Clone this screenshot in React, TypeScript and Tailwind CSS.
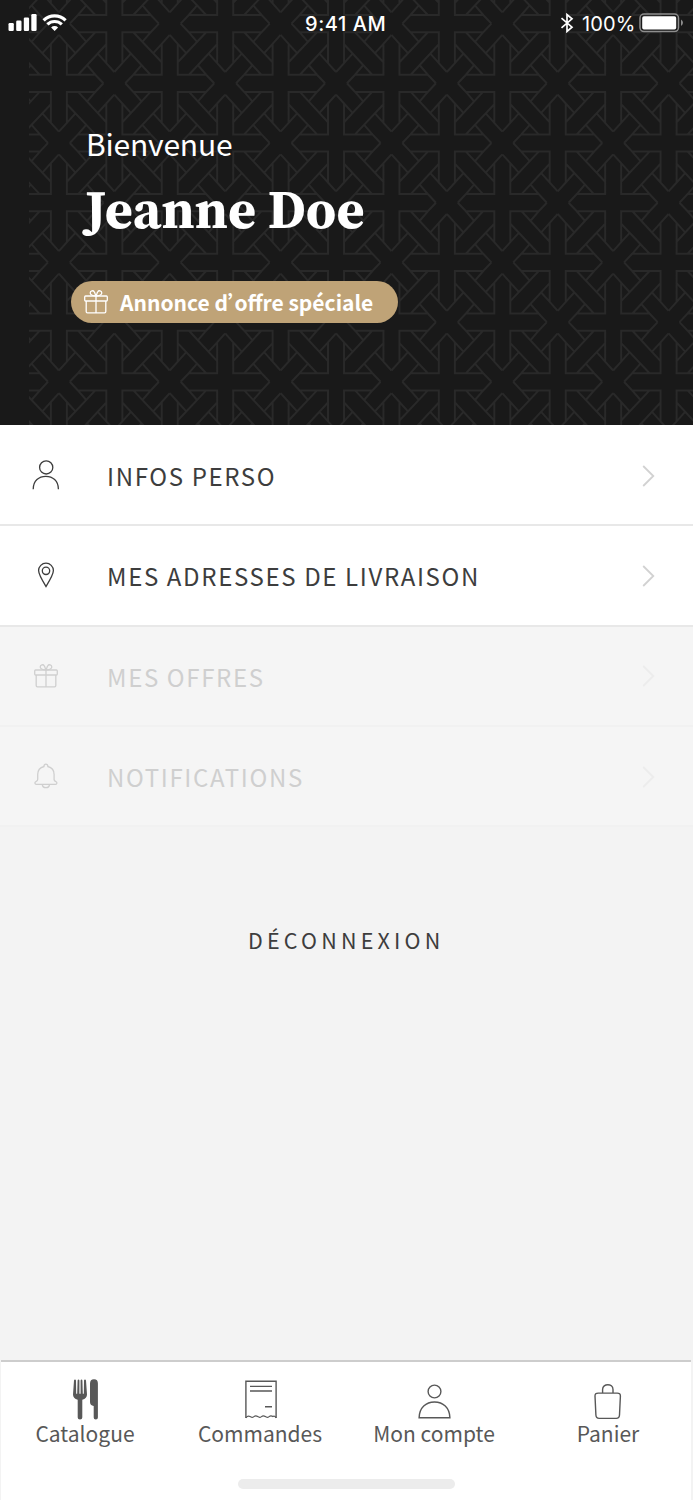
import React from "react";

const sans = "font-['Noto_Sans_CJK_SC',sans-serif]";

const CELL =
  "M44.5 0L36.4 8.6H8V39.5L0 48.4M10.9 59.7L19 51.1H47.4V20.2L55.4 11.3M19.3 8.6L47.4 39M8 21L36.4 51.1M36.4 8.6L28.5 17.8M47.4 20.2L38.9 29.6M8 39.5L16.5 30.1M19 51.1L26.9 42";

const TILE_W = 110.85;
const TILE_H = 119.4;
const COLUMNS = [-1, 0, 1, 2, 3, 4, 5];
const LINES = [-1, 0, 1, 2];

function Lattice() {
  return (
    <svg className="absolute top-0 left-[29px]" width="664" height="425" viewBox="29 0 664 425">
      <defs>
        <g id="lattice-tile" fill="none" stroke="#292929" strokeWidth="2">
          <path d={CELL} />
          <path d={CELL} transform="translate(110.85 0) scale(-1 1)" />
          <path d={CELL} transform="translate(0 119.4) scale(1 -1)" />
          <path d={CELL} transform="translate(110.85 119.4) scale(-1 -1)" />
        </g>
      </defs>
      {LINES.map((line) =>
        COLUMNS.map((column) => (
          <use key={`${line}:${column}`} href="#lattice-tile" x={58.9 + column * TILE_W} y={83.3 + line * TILE_H} />
        ))
      )}
    </svg>
  );
}

function StatusBar() {
  return (
    <div className="relative flex h-[46px] items-center justify-between pr-[9px] pl-2 font-['Inter',sans-serif] text-white">
      <svg width="60" height="20" viewBox="8 13 60 20" fill="#fff">
        <rect x="8.5" y="23" width="5.3" height="8" rx="1.2" />
        <rect x="16.2" y="20.5" width="5.3" height="10.5" rx="1.2" />
        <rect x="23.8" y="17.5" width="5.3" height="13.5" rx="1.2" />
        <rect x="31.3" y="14" width="5.3" height="17" rx="1.2" />
        <g fill="none" stroke="#fff" strokeWidth="3.1">
          <path d="M43.6 20.3a15.8 15.8 0 0 1 22 0" />
          <path d="M47.4 24.4a10.3 10.3 0 0 1 14.4 0" />
        </g>
        <path d="M51.1 27.4a5 5 0 0 1 7 0L54.6 31z" />
      </svg>
      <span className="absolute left-[305px] pt-[2px] text-[20px] leading-[24px] font-medium tracking-[0.55px]">9:41 AM</span>
      <div className="flex items-center">
        <svg width="14" height="20" viewBox="0 0 14 20" fill="none" stroke="#fff" strokeWidth="1.7">
          <path d="M1.5 5.2L12 14.2L7 18.4V1.6L12 5.8L1.5 14.8" />
        </svg>
        <span className="ml-2 w-[57px] pt-[2px] text-[20px] leading-[24px] tracking-[0.1px]">100%</span>
        <svg width="45" height="20" viewBox="0 0 45 20">
          <rect x="1" y="1" width="38.5" height="17.6" rx="4" fill="none" stroke="#8d8d8d" strokeWidth="1.5" />
          <rect x="3.2" y="3.2" width="34" height="13.2" rx="1.7" fill="#fff" />
          <path d="M42 6.6q2 1.2 2 3.2t-2 3.2z" fill="#8d8d8d" />
        </svg>
      </div>
    </div>
  );
}

function Gift({ className }: { className: string }) {
  return (
    <svg className={className} width="24" height="24" viewBox="0 0 24 24" fill="none" stroke="currentColor" strokeWidth="1.3">
      <rect x="0.7" y="6" width="22.6" height="5" rx="0.9" />
      <path d="M2.2 11V21.6q0 1.2 1.2 1.2H20.6q1.2 0 1.2-1.2V11M12 6V22.8" />
      <path d="M12 5.8C9.5 6 6.2 5 6.2 3C6.2 .6 9.2 .1 10.3 1.8C11.3 3.2 11 4.5 12 5.8C13 4.5 12.7 3.2 13.7 1.8C14.8 .1 17.8 .6 17.8 3C17.8 5 14.5 6 12 5.8Z" />
    </svg>
  );
}

function Person() {
  return (
    <svg width="28" height="30" viewBox="0 0 28 30" fill="none" stroke="currentColor" strokeWidth="1.3">
      <circle cx="14.2" cy="7.4" r="6.6" />
      <path d="M1.2 29.2C1.2 20.5 7 16.3 13.8 16.3S26.4 20.5 26.4 29.2" />
    </svg>
  );
}

function Pin() {
  return (
    <svg width="18" height="26" viewBox="0 0 18 26" fill="none" stroke="currentColor" strokeWidth="1.3">
      <path d="M9 24.6C6.5 20.5 1.6 12.6 1.6 8.6a7.4 7.4 0 0 1 14.8 0C16.4 12.6 11.5 20.5 9 24.6Z" />
      <circle cx="9" cy="8.8" r="3.7" />
    </svg>
  );
}

function Bell() {
  return (
    <svg width="24" height="26" viewBox="0 0 24 26" fill="none" stroke="currentColor" strokeWidth="1.3" strokeLinejoin="round">
      <path d="M10 3.5C9.6 .4 14.2 .4 13.8 3.5C18 4.5 20.1 7.7 20.1 11.6V16.6Q20.2 18 21.9 18.6C23.5 19.2 23 21.3 21.6 21.3H2.2C.8 21.3 .3 19.2 1.9 18.6Q3.7 18 3.7 16.6V11.6C3.7 7.7 5.8 4.5 10 3.5Z" />
      <path d="M8.3 21.4C8.6 25.8 15.2 25.8 15.5 21.4" />
    </svg>
  );
}

function Row({ icon, label, disabled }: { icon: React.ReactNode; label: string; disabled?: boolean }) {
  return (
    <button
      className={
        "flex h-[100.3px] w-full items-center border-b-2 pr-[37px] text-left " +
        (disabled ? "border-[#f1f1f1] bg-[#f5f5f5] text-[#cfcfcf]" : "border-[#e8e8e8] bg-white text-[#3d3d3d]")
      }
    >
      <span className="flex w-[92px] shrink-0 justify-center">{icon}</span>
      <span className="ml-[15px] flex-1 pt-[2px] text-[24px] leading-[36px] tracking-[1.64px] whitespace-nowrap">{label}</span>
      <svg
        className={"mt-px " + (disabled ? "text-[#ececec]" : "text-[#d2d2d2]")}
        width="14"
        height="22"
        viewBox="0 0 14 22"
        fill="none"
        stroke="currentColor"
        strokeWidth="1.8"
      >
        <path d="M1.2 1L11.3 11L1.2 21" />
      </svg>
    </button>
  );
}

function Tab({ icon, label, className }: { icon: React.ReactNode; label: string; className: string }) {
  return (
    <button className={"flex shrink-0 flex-col items-center " + className}>
      <span className="flex h-[42px] items-end">{icon}</span>
      <span className="-mt-[2px] text-[21px] leading-[30px] whitespace-nowrap">{label}</span>
    </button>
  );
}

export default function App() {
  return (
    <main className={"flex h-[1500px] w-[693px] flex-col overflow-hidden bg-[#f3f3f3] " + sans}>
      <header className="relative h-[425px] shrink-0 overflow-hidden bg-[#191919] text-white">
        <Lattice />
        <StatusBar />
        <div className="relative flex flex-col items-start">
          <p className="mt-[74px] ml-[86px] text-[30px] leading-[46px] tracking-[-0.2px]">Bienvenue</p>
          <h1 className="mt-[9px] ml-[85px] font-['Source_Serif_Pro','Source_Serif_4','Noto_Serif_CJK_SC','Liberation_Serif',serif] text-[54px] leading-[68px] font-bold whitespace-nowrap">
            Jeanne Doe
          </h1>
          <div className="mt-[38px] ml-[71px] flex h-[42px] w-[327px] items-center rounded-full bg-[#bfa377] pl-[13px]">
            <Gift className="text-white" />
            <span className="ml-[12px] text-[21px] leading-[30px] font-bold whitespace-nowrap [font-feature-settings:'palt']">
              Annonce d<span className="tracking-[-4px]">’</span>offre spéciale
            </span>
          </div>
        </div>
      </header>

      <nav className="flex shrink-0 flex-col bg-white pt-px">
        <Row icon={<Person />} label="INFOS PERSO" />
        <Row icon={<Pin />} label="MES ADRESSES DE LIVRAISON" />
        <Row icon={<Gift className="mt-px" />} label="MES OFFRES" disabled />
        <Row icon={<Bell />} label="NOTIFICATIONS" disabled />
      </nav>

      <button className="mt-[95px] ml-[248px] self-start text-[21.5px] leading-[36px] tracking-[4.2px] whitespace-nowrap text-[#3d3d3d]">
        DÉCONNEXION
      </button>

      <footer className="mt-auto mr-[2px] ml-px flex h-[140px] shrink-0 flex-col border-t-2 border-[#cdcdcd] bg-white text-[#585858]">
        <div className="flex h-[90px] pt-[16px]">
          <Tab
            className="w-[168px]"
            label="Catalogue"
            icon={
              <svg className="ml-[2px]" width="26" height="41" viewBox="0 0 26 41" fill="#585858">
                <path d="M1 1.6Q1.2.4 2 .4T3 1.6L3.2 14.7H4.2L4.6 1.6Q4.8.4 5.5.4T6.4 1.6V14.7H7.6V1.6Q7.8.4 8.5.4T9.4 1.6L9.8 14.7H10.8L11 1.6Q11.2.4 12 .4T13 1.6L14 15.5Q14 19.5 9.3 20.8V38.4Q9.3 40.5 7 40.5T4.7 38.4V20.8Q0 19.5 0 15.5Z" />
                <path d="M17 4.5Q17 .2 21 .2T24.9 4.5V38.4Q24.9 40.5 22.8 40.5T20.7 38.4V27Q17 26.5 17 23Z" />
              </svg>
            }
          />
          <Tab
            className="ml-[7px] w-[168px]"
            label="Commandes"
            icon={
              <svg className="mb-px ml-[2px]" width="32" height="39" viewBox="0 0 32 39" fill="none" stroke="#585858" strokeWidth="1.4">
                <path d="M.9 38V1.2H31.1V38M5 6.4H27M5 11H27M20 26.8H27" />
                <path d="M.9 37.8Q2.9 35.2 5 36.6T8.9 36.6T12.7 36.6T16.5 36.6T20.3 36.6T24.1 36.6T27.9 36.6Q29.5 35.4 31.1 37.8" strokeWidth="1.2" />
              </svg>
            }
          />
          <Tab
            className="ml-[6px] w-[168px]"
            label="Mon compte"
            icon={
              <svg className="mb-px ml-px" width="33" height="35" viewBox="0 0 33 35" fill="none" stroke="#585858" strokeWidth="1.4">
                <circle cx="16.5" cy="7.5" r="6.4" />
                <path d="M1.1 33.7C1.4 23.5 8 18 16.5 18S31.6 23.5 31.9 33.7Z" />
              </svg>
            }
          />
          <Tab
            className="ml-[6px] w-[168px]"
            label="Panier"
            icon={
              <svg width="28" height="37" viewBox="0 0 28 37" fill="none" stroke="#585858" strokeWidth="1.4">
                <path d="M4.2 10.1H23.2Q26.5 10.1 26.4 13L25.5 32Q25.3 35.4 22.3 35.4H5.1Q2.1 35.4 1.9 32L1 13Q.9 10.1 4.2 10.1Z" />
                <path d="M8.6 10.1V6.4C8.6.1 19 .1 19 6.4V10.1" />
              </svg>
            }
          />
        </div>
        <div className="mt-[27px] ml-[237px] h-[10px] w-[217px] rounded-full bg-[#ececec]" />
      </footer>
    </main>
  );
}
